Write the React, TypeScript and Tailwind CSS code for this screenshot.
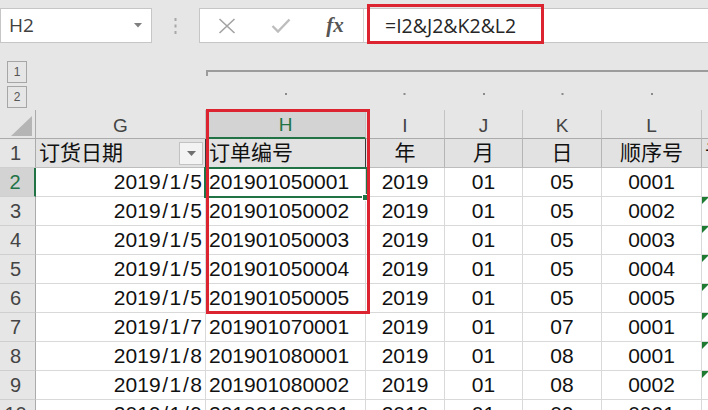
import React from "react";

type Col = { key: string; w: number; align: "left" | "right" | "center" };

const cols: Col[] = [
  { key: "G", w: 170, align: "right" },
  { key: "H", w: 160, align: "left" },
  { key: "I", w: 79, align: "center" },
  { key: "J", w: 78, align: "center" },
  { key: "K", w: 79, align: "center" },
  { key: "L", w: 100, align: "center" },
  { key: "M", w: 40, align: "left" },
];

const headers = ["订货日期", "订单编号", "年", "月", "日", "顺序号", "订"];

const rows: string[][] = [
  ["2019/1/5", "201901050001", "2019", "01", "05", "0001"],
  ["2019/1/5", "201901050002", "2019", "01", "05", "0002"],
  ["2019/1/5", "201901050003", "2019", "01", "05", "0003"],
  ["2019/1/5", "201901050004", "2019", "01", "05", "0004"],
  ["2019/1/5", "201901050005", "2019", "01", "05", "0005"],
  ["2019/1/7", "201901070001", "2019", "01", "07", "0001"],
  ["2019/1/8", "201901080001", "2019", "01", "08", "0001"],
  ["2019/1/8", "201901080002", "2019", "01", "08", "0002"],
  ["2019/1/9", "201901090001", "2019", "01", "09", "0001"],
];

const font = { fontFamily: '"Liberation Sans", "Noto Sans CJK SC", sans-serif' };

const alignClass = (a: Col["align"]) =>
  a === "right" ? "justify-end pr-[3px]" : a === "left" ? "justify-start pl-[3px]" : "justify-center";

// dates use a wider slash, like the sheet's font
const renderValue = (v: string) => {
  if (!v.includes("/")) return v;
  const parts = v.split("/");
  return parts.map((p, i) => (
    <React.Fragment key={i}>
      {i > 0 && <span className="px-[1.6px]">/</span>}
      {p}
    </React.Fragment>
  ));
};

const FormulaBar: React.FC = () => (
  <div className="h-[55px] flex items-start pt-[8px]">
    <div className="w-[152px] h-[35px] bg-white border border-[#c6c6c6] flex items-center justify-between pl-[8px] pr-[9px]">
      <span className="text-[19px] text-[#404040]" style={{ fontFamily: '"Open Sans", sans-serif' }}>
        H2
      </span>
      <svg width="8" height="5" viewBox="0 0 8 5">
        <path d="M0 0 L8 0 L4 4.5 Z" fill="#7f7f7f" />
      </svg>
    </div>
    <div className="w-[47px] h-[35px] flex items-center justify-center">
      <svg width="3" height="16" viewBox="0 0 3 16">
        <rect x="0.5" y="0" width="2" height="3" fill="#a8a8a8" />
        <rect x="0.5" y="6.5" width="2" height="3" fill="#a8a8a8" />
        <rect x="0.5" y="13" width="2" height="3" fill="#a8a8a8" />
      </svg>
    </div>
    <div className="flex-1 h-[35px] bg-white border border-[#c6c6c6] border-r-0 flex items-center">
      <div className="w-[163px] h-full flex items-center">
        <div className="w-[54px] flex justify-center">
          <svg width="18" height="16" viewBox="0 0 18 16">
            <path d="M1.5 1 L16.5 15 M16.5 1 L1.5 15" stroke="#a3a3a3" strokeWidth="1.6" fill="none" />
          </svg>
        </div>
        <div className="w-[54px] flex justify-center">
          <svg width="20" height="15" viewBox="0 0 20 15">
            <path d="M1.5 8 L7 13.5 L18.5 1.5" stroke="#bdbdbd" strokeWidth="2.4" fill="none" />
          </svg>
        </div>
        <div className="w-[54px] flex justify-center">
          <span
            className="text-[21px] italic font-bold text-[#555555] leading-none"
            style={{ fontFamily: '"Liberation Serif", serif' }}
          >
            fx
          </span>
        </div>
      </div>
      <div className="h-full border-l border-[#d4d4d4] flex items-center pl-[21px]">
        <span className="text-[19.5px] text-[#262626]" style={{ fontFamily: '"Open Sans", sans-serif' }}>
          =I2&amp;J2&amp;K2&amp;L2
        </span>
      </div>
    </div>
  </div>
);

const OutlineArea: React.FC = () => (
  <div className="h-[55px] flex">
    <div className="w-[36px] flex flex-col gap-[3px] pt-[6px] pl-[7px]">
      {["1", "2"].map((n) => (
        <div
          key={n}
          className="w-[20px] h-[22px] border border-[#a6a6a6] flex items-center justify-center text-[12px] text-[#555555]"
          style={font}
        >
          {n}
        </div>
      ))}
    </div>
    <svg width="672" height="55" viewBox="0 0 672 55">
      <path d="M171 21 L171 16 L672 16" stroke="#9c9c9c" strokeWidth="2" fill="none" />
      {[250, 368.5, 448, 526.5, 616].map((x) => (
        <rect key={x} x={x - 1} y={38} width="2" height="2" fill="#8a8a8a" />
      ))}
    </svg>
  </div>
);

const HeaderRow: React.FC = () => (
  <div className="h-[29px] flex">
    <div className="w-[36px] shrink-0 border-r border-b border-[#ababab] flex items-end justify-end pr-[3px] pb-[2px]">
      <svg width="21" height="20" viewBox="0 0 21 20">
        <path d="M21 0 L21 20 L0 20 Z" fill="#b5b5b5" />
      </svg>
    </div>
    {cols.map((c) => {
      const sel = c.key === "H";
      return (
        <div
          key={c.key}
          style={{ width: c.w, ...font }}
          className={`shrink-0 flex items-center justify-center pt-[4px] text-[19px] border-r border-[#c4c4c4] ${
            sel ? "bg-[#d3d3d3] text-[#217346] border-b-2 border-b-[#217346]" : "text-[#444444] border-b border-b-[#ababab]"
          }`}
        >
          {c.key === "M" ? "" : c.key}
        </div>
      );
    })}
  </div>
);

const TitleRow: React.FC = () => (
  <div className="h-[29px] flex">
    <div
      className="w-[36px] shrink-0 border-r border-b border-r-[#ababab] border-b-[#cfcfcf] flex items-center justify-center pr-[4px] text-[20px] text-[#444444]"
      style={font}
    >
      1
    </div>
    {cols.map((c, i) => (
      <div
        key={c.key}
        style={{ width: c.w, ...font }}
        className={`shrink-0 flex items-center text-[21px] text-[#111111] bg-[#e2e2e2] border-b border-b-[#bdbdbd] border-r ${
          c.key === "G" || c.key === "H" ? "border-r-[#3a3a3a]" : "border-r-[#b5b5b5]"
        } ${c.align === "center" ? "justify-center" : "justify-between pl-[3px] pr-[2px]"} overflow-hidden whitespace-nowrap`}
      >
        <span>{headers[i]}</span>
        {c.key === "G" && (
          <div className="w-[24px] h-[23px] bg-[#f3f3f3] border border-[#c2c2c2] flex items-center justify-center">
            <svg width="9" height="5" viewBox="0 0 9 5">
              <path d="M0 0 L9 0 L4.5 5 Z" fill="#6f6f6f" />
            </svg>
          </div>
        )}
      </div>
    ))}
  </div>
);

const DataRow: React.FC<{ n: number; vals: string[] }> = ({ n, vals }) => {
  const sel = n === 2;
  return (
    <div className="h-[29px] flex">
      <div
        className={`w-[36px] shrink-0 border-b border-b-[#cfcfcf] flex items-center justify-center pr-[4px] text-[20px] ${
          sel ? "bg-[#d3d3d3] text-[#217346] border-r-2 border-r-[#217346]" : "text-[#444444] border-r border-r-[#ababab]"
        }`}
        style={font}
      >
        {n}
      </div>
      {cols.map((c, i) => (
        <div
          key={c.key}
          style={{ width: c.w, ...font }}
          className={`relative shrink-0 flex items-center bg-white text-[21px] text-[#111111] border-r border-b border-[#d9d9d9] whitespace-nowrap ${alignClass(
            c.align
          )}`}
        >
          {renderValue(vals[i] ?? "")}
          {c.key === "M" && n >= 3 && n <= 9 && (
            <svg className="absolute left-0 top-0" width="7" height="7" viewBox="0 0 7 7">
              <path d="M0 0 L7 0 L0 7 Z" fill="#1f7a32" />
            </svg>
          )}
        </div>
      ))}
    </div>
  );
};

export default function App() {
  return (
    <div className="relative w-[708px] h-[410px] overflow-hidden bg-[#e6e6e6]">
      <FormulaBar />
      <OutlineArea />
      <HeaderRow />
      <TitleRow />
      {rows.map((r, i) => (
        <DataRow key={i} n={i + 2} vals={r} />
      ))}

      {/* selected cell H2 */}
      <div className="absolute left-[204px] top-[167px] w-[164px] h-[31px] border-2 border-[#217346]" />
      <div className="absolute left-[362px] top-[194px] w-[7px] h-[7px] bg-[#217346] border border-white" />

      {/* red highlight boxes */}
      <div className="absolute left-[367px] top-[4px] w-[177px] h-[40px] border-[3px] border-[#dc2430]" />
      <div className="absolute left-[206px] top-[109px] w-[164px] h-[205px] border-[3px] border-[#dc2430]" />
    </div>
  );
}
